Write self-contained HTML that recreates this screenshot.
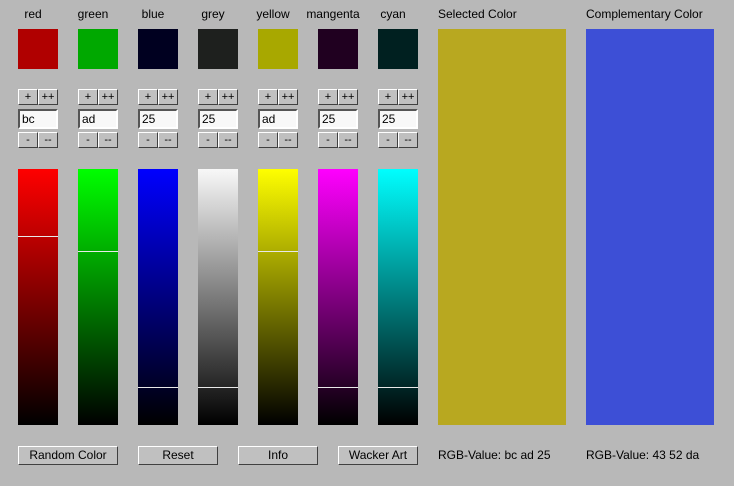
<html><head><style>
body{margin:0;width:734px;height:486px;background:#b8b8b8;font-family:"Liberation Sans",sans-serif;font-size:12px;position:relative;overflow:hidden}
.a{position:absolute}
.lbl{position:absolute;top:7px;width:60px;text-align:center;color:#000}
.sw{position:absolute;top:29px;width:40px;height:40px}
.b{position:absolute;height:16px;background:#c0c0c0;border:1px solid;border-color:#fff #404040 #404040 #fff;box-sizing:border-box;font-size:11px;text-align:center;line-height:14px;width:20px}
.in{position:absolute;top:109px;width:40px;height:20px;box-sizing:border-box;background:#f8f8f8;border:2px solid;border-color:#555 #fff #fff #555;padding-left:2px;line-height:16px;font-size:12px}
.g{position:absolute;top:169px;width:40px;height:256px}
.ln{position:absolute;left:0;width:40px;height:1px;background:#e8e8e8}
.bt{position:absolute;top:446px;height:19px;box-sizing:border-box;background:#c0c0c0;border:1px solid;border-color:#fff #404040 #404040 #fff;text-align:center;line-height:16px}
</style></head><body>
<div class="lbl" style="left:3px">red</div>
<div class="lbl" style="left:63px">green</div>
<div class="lbl" style="left:123px">blue</div>
<div class="lbl" style="left:183px">grey</div>
<div class="lbl" style="left:243px">yellow</div>
<div class="lbl" style="left:303px">mangenta</div>
<div class="lbl" style="left:363px">cyan</div>
<div class="a" style="left:438px;top:7px">Selected Color</div>
<div class="a" style="left:586px;top:7px">Complementary Color</div>

<div class="sw" style="left:18px;background:#b00000"></div>
<div class="sw" style="left:78px;background:#00a800"></div>
<div class="sw" style="left:138px;background:#000020"></div>
<div class="sw" style="left:198px;background:#1e201e"></div>
<div class="sw" style="left:258px;background:#a8a800"></div>
<div class="sw" style="left:318px;background:#200020"></div>
<div class="sw" style="left:378px;background:#002020"></div>

<div class="b" style="left:18px;top:89px">+</div><div class="b" style="left:38px;top:89px">++</div>
<div class="b" style="left:78px;top:89px">+</div><div class="b" style="left:98px;top:89px">++</div>
<div class="b" style="left:138px;top:89px">+</div><div class="b" style="left:158px;top:89px">++</div>
<div class="b" style="left:198px;top:89px">+</div><div class="b" style="left:218px;top:89px">++</div>
<div class="b" style="left:258px;top:89px">+</div><div class="b" style="left:278px;top:89px">++</div>
<div class="b" style="left:318px;top:89px">+</div><div class="b" style="left:338px;top:89px">++</div>
<div class="b" style="left:378px;top:89px">+</div><div class="b" style="left:398px;top:89px">++</div>
<div class="in" style="left:18px">bc</div>
<div class="in" style="left:78px">ad</div>
<div class="in" style="left:138px">25</div>
<div class="in" style="left:198px">25</div>
<div class="in" style="left:258px">ad</div>
<div class="in" style="left:318px">25</div>
<div class="in" style="left:378px">25</div>
<div class="b" style="left:18px;top:132px">-</div><div class="b" style="left:38px;top:132px">--</div>
<div class="b" style="left:78px;top:132px">-</div><div class="b" style="left:98px;top:132px">--</div>
<div class="b" style="left:138px;top:132px">-</div><div class="b" style="left:158px;top:132px">--</div>
<div class="b" style="left:198px;top:132px">-</div><div class="b" style="left:218px;top:132px">--</div>
<div class="b" style="left:258px;top:132px">-</div><div class="b" style="left:278px;top:132px">--</div>
<div class="b" style="left:318px;top:132px">-</div><div class="b" style="left:338px;top:132px">--</div>
<div class="b" style="left:378px;top:132px">-</div><div class="b" style="left:398px;top:132px">--</div>

<div class="g" style="left:18px;background:linear-gradient(#ff0000,#000)"><div class="ln" style="top:67px"></div></div>
<div class="g" style="left:78px;background:linear-gradient(#00ff00,#000)"><div class="ln" style="top:82px"></div></div>
<div class="g" style="left:138px;background:linear-gradient(#0000ff,#000)"><div class="ln" style="top:218px"></div></div>
<div class="g" style="left:198px;background:linear-gradient(#f8f8f8,#000)"><div class="ln" style="top:218px"></div></div>
<div class="g" style="left:258px;background:linear-gradient(#ffff00,#000)"><div class="ln" style="top:82px"></div></div>
<div class="g" style="left:318px;background:linear-gradient(#ff00ff,#000)"><div class="ln" style="top:218px"></div></div>
<div class="g" style="left:378px;background:linear-gradient(#00ffff,#000)"><div class="ln" style="top:218px"></div></div>

<div class="a" style="left:438px;top:29px;width:128px;height:396px;background:#b8a820"></div>
<div class="a" style="left:586px;top:29px;width:128px;height:396px;background:#3d4fd6"></div>

<div class="bt" style="left:18px;width:100px">Random Color</div>
<div class="bt" style="left:138px;width:80px">Reset</div>
<div class="bt" style="left:238px;width:80px">Info</div>
<div class="bt" style="left:338px;width:80px">Wacker Art</div>
<div class="a" style="left:438px;top:448px">RGB-Value: bc ad 25</div>
<div class="a" style="left:586px;top:448px">RGB-Value: 43 52 da</div>
</body></html>
